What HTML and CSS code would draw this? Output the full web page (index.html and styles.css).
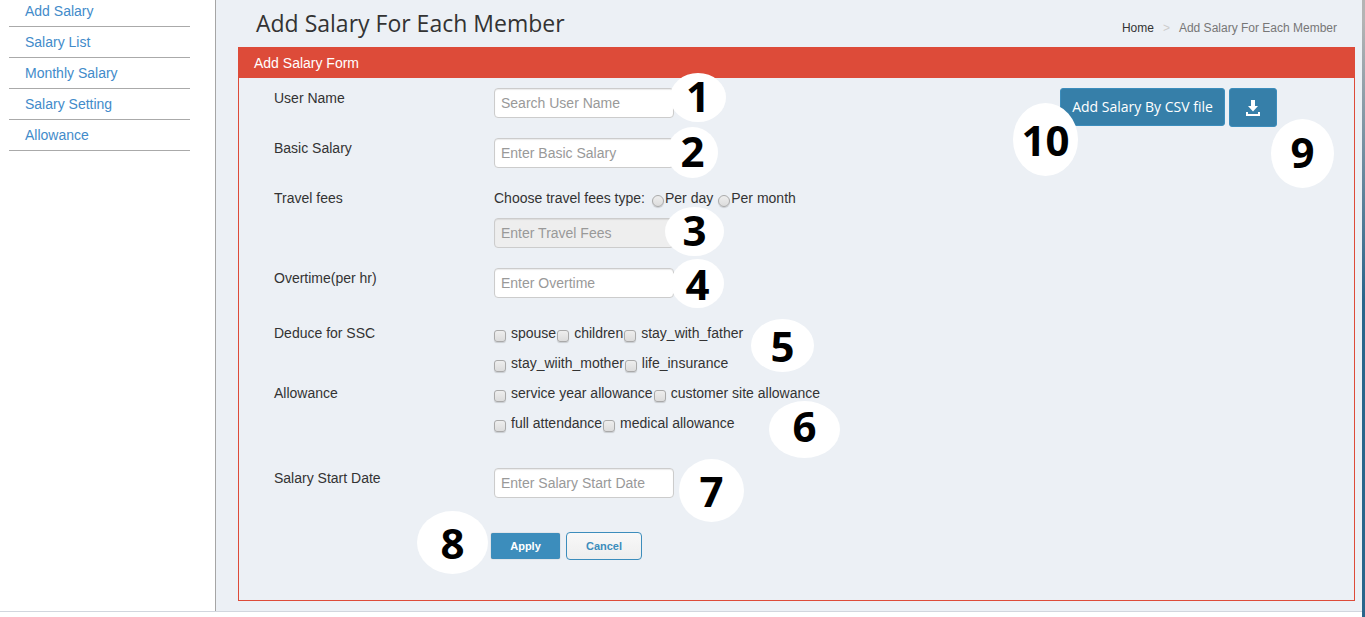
FILE: index.html
```html
<!DOCTYPE html>
<html lang="en">
<head>
<meta charset="utf-8">
<title>Add Salary For Each Member</title>
<link rel="stylesheet" href="styles.css">
</head>
<body>
<div class="page">
  <div class="layout">
    <nav class="sidebar">
      <ul class="menu">
        <li><a href="#">Add Salary</a></li>
        <li><a href="#">Salary List</a></li>
        <li><a href="#">Monthly Salary</a></li>
        <li><a href="#">Salary Setting</a></li>
        <li><a href="#">Allowance</a></li>
      </ul>
    </nav>
    <main class="content">
      <header class="heading">
        <h1>Add Salary For Each Member</h1>
        <div class="breadcrumb"><a href="#">Home</a><span class="sep">&gt;</span><span>Add Salary For Each Member</span></div>
      </header>
      <section class="panel">
        <h2>Add Salary Form</h2>
        <div class="panel-body">
          <form class="form">
            <div class="row">
              <label for="user">User Name</label>
              <div class="field"><input id="user" class="text" type="text" placeholder="Search User Name"><span class="badge b1">1</span></div>
            </div>
            <div class="row">
              <label for="basic">Basic Salary</label>
              <div class="field"><input id="basic" class="text" type="text" placeholder="Enter Basic Salary"><span class="badge b2">2</span></div>
            </div>
            <div class="row">
              <label for="travel">Travel fees</label>
              <div class="field">
                <div class="radios"><span class="prompt">Choose travel fees type:</span><label><input type="radio" name="fee">Per day</label><label><input type="radio" name="fee">Per month</label></div>
                <input id="travel" class="text" type="text" placeholder="Enter Travel Fees" disabled><span class="badge b3">3</span>
              </div>
            </div>
            <div class="row">
              <label for="overtime">Overtime(per hr)</label>
              <div class="field"><input id="overtime" class="text" type="text" placeholder="Enter Overtime"><span class="badge b4">4</span></div>
            </div>
            <div class="checks">
              <div class="row">
                <span class="title">Deduce for SSC</span>
                <div class="field">
                  <div class="line"><label><input type="checkbox">spouse</label><label><input type="checkbox">children</label><label><input type="checkbox">stay_with_father</label></div>
                  <div class="line"><label><input type="checkbox">stay_wiith_mother</label><label><input type="checkbox">life_insurance</label></div>
                  <span class="badge b5">5</span>
                </div>
              </div>
              <div class="row">
                <span class="title">Allowance</span>
                <div class="field">
                  <div class="line"><label><input type="checkbox">service year allowance</label><label><input type="checkbox">customer site allowance</label></div>
                  <div class="line"><label><input type="checkbox">full attendance</label><label><input type="checkbox">medical allowance</label></div>
                  <span class="badge b6">6</span>
                </div>
              </div>
            </div>
            <div class="row">
              <label for="start">Salary Start Date</label>
              <div class="field"><input id="start" class="text" type="text" placeholder="Enter Salary Start Date"><span class="badge b7">7</span></div>
            </div>
            <div class="buttons">
              <button class="apply" type="button">Apply</button><button class="cancel" type="button">Cancel</button>
              <span class="badge b8">8</span>
            </div>
          </form>
          <div class="actions">
            <button class="csv" type="button">Add Salary By CSV file</button>
            <button class="download" type="button" aria-label="Download"><svg width="14" height="16" viewBox="0 0 14 16"><path fill="#fff" d="M5 0h4v6h3l-5 5.500L2 6h3zM0 12h2v2h10v-2h2v4H0z"/></svg></button>
            <span class="badge b9">9</span><span class="badge b10">10</span>
          </div>
        </div>
      </section>
    </main>
  </div>
  <div class="edge"></div>
</div>
</body>
</html>
```
FILE: styles.css
```css
* { box-sizing: border-box; }
body {
  margin: 0;
  font: 14px/20px "Liberation Sans", Arial, sans-serif;
  color: #333;
  background: #fff;
}
.page { display: flex; min-height: 100vh; }
.layout {
  flex: 1;
  display: flex;
  margin-bottom: 5px;
  border-bottom: 1px solid #d2d6de;
}
.edge { width: 3px; background: linear-gradient(#b4b4b4 20px, #2a658b 300px); }
.sidebar { width: 216px; padding-left: 9px; border-right: 1px solid #a5a5a5; }
.menu { list-style: none; margin: 0; padding: 0; width: 181px; }
.menu li { height: 31px; padding: 5px 0 5px 16px; border-bottom: 1px solid #aaa; }
.menu li:first-child { height: 27px; padding-top: 1px; }
.menu a { color: #428bca; text-decoration: none; }
.content {
  flex: 1;
  display: flex;
  flex-direction: column;
  padding: 0 7px 10px 22px;
  background: #ecf0f5;
}
.heading { display: flex; justify-content: space-between; height: 47px; padding: 8px 18px 0; }
h1 { margin: 0; font: 400 23px/30px "Open Sans", "Noto Sans", sans-serif; }
.breadcrumb { display: flex; padding-top: 10px; font-size: 12px; color: #777; }
.breadcrumb a { color: #333; text-decoration: none; }
.sep { padding: 0 9px; color: #ccc; }
.panel { flex: 1; border: 1px solid #dd4b39; }
h2 {
  margin: 0;
  padding: 5px 15px;
  font-size: 14px;
  line-height: 20px;
  font-weight: 400;
  color: #fff;
  background: #dd4b39;
}
.panel-body { display: flex; justify-content: space-between; padding: 10px 77px 40px 35px; }
.form { display: flex; flex-direction: column; gap: 20px; }
.row { display: grid; grid-template-columns: 220px 1fr; }
.row > label, .title { line-height: 20px; }
.title { padding-top: 5px; }
.field { position: relative; width: 400px; }
.text {
  display: block;
  width: 180px;
  height: 30px;
  padding: 4px 6px;
  border: 1px solid #ccc;
  border-radius: 4px;
  background: #fff;
  box-shadow: inset 0 1px 1px rgba(0, 0, 0, .08);
  font: inherit;
}
.text::placeholder { color: #999; }
.text:disabled { background: #eee; }
.radios { display: flex; gap: 5px; margin-bottom: 10px; }
.prompt { padding-right: 2px; }
.radios label { display: flex; gap: 1px; }
.line { display: flex; gap: 1px; height: 30px; padding-top: 5px; }
.line label { display: flex; gap: 5px; }
input[type="radio"], input[type="checkbox"] {
  appearance: none;
  flex: none;
  width: 12px;
  height: 12px;
  margin: 7px 0 0;
  border: 1px solid #aaa;
  border-radius: 3px;
  background: linear-gradient(#eee, #dcdcdc);
  box-shadow: 0 1px 1px rgba(0, 0, 0, .15);
}
input[type="radio"] { border-radius: 50%; }
.checks { margin-bottom: 10px; }
.buttons { position: relative; display: flex; align-items: center; gap: 6px; margin: 14px 0 0 217px; }
.buttons button { font: 700 11px/16px "Liberation Sans", Arial, sans-serif; border-radius: 4px; padding: 5px 18px; }
.buttons .apply { width: 69px; height: 26px; border: 0; border-radius: 2px; color: #fff; background: #3c8dbc; box-shadow: 0 0 1px #888; }
.buttons .cancel { width: 76px; height: 28px; border: 1px solid #3c8dbc; color: #3c8dbc; background: linear-gradient(#f8f8f8, #eee); }
.actions { position: relative; display: flex; align-items: flex-start; gap: 4px; }
.actions button { height: 38px; border: 1px solid #3c8dbc; border-radius: 3px; color: #fff; background: #367fa9; }
.actions .csv { width: 165px; padding: 0; font: 14px/20px "Open Sans", "Noto Sans", sans-serif; white-space: nowrap; }
.actions .download { display: flex; align-items: center; justify-content: center; width: 48px; height: 39px; padding: 0; }

/* Numbered callouts over the form */
.badge {
  position: absolute;
  display: flex;
  align-items: center;
  justify-content: center;
  padding-bottom: 3px;
  border-radius: 50%;
  background: #fff;
  color: #000;
  font: 700 42px/32px "Open Sans", "Noto Sans", sans-serif;
}
.b1 { left: 176px; top: -15px; width: 56px; height: 49px; }
.b2 { left: 173px; top: -11px; width: 51px; height: 51px; }
.b3 { left: 171px; top: 19px; width: 59px; height: 49px; }
.b4 { left: 177px; top: -9px; width: 53px; height: 49px; }
.b5 { left: 257px; top: 1px; width: 63px; height: 53px; }
.b6 { left: 275px; top: 23px; width: 71px; height: 57px; }
.b7 { left: 185px; top: -9px; width: 65px; height: 63px; }
.b8 { left: -74px; top: -21px; width: 71px; height: 63px; }
.b9 { right: -57px; top: 31px; width: 63px; height: 69px; }
.b10 { left: -47px; top: 15px; width: 65px; height: 73px; }
.b4, .b5, .b7, .b8, .b10 { padding-bottom: 0; }
.b6 { padding-bottom: 7px; }
```
